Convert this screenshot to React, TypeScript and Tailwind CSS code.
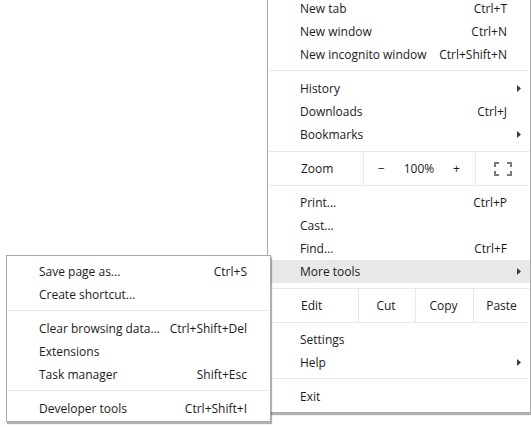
import React from 'react';

const font = { fontFamily: '"Open Sans", "Noto Sans", sans-serif' };

function Arrow() {
  return (
    <svg width="4" height="7" viewBox="0 0 4 7" className="block">
      <polygon points="0,0 4,3.5 0,7" fill="#3c3c3c" />
    </svg>
  );
}

function FullscreenIcon() {
  return (
    <svg width="18" height="14" viewBox="0 0 18 14" className="block">
      <g fill="none" stroke="#7a7a7a" strokeWidth="2">
        <path d="M1 5V1h4" />
        <path d="M13 1h4v4" />
        <path d="M17 9v4h-4" />
        <path d="M5 13H1V9" />
      </g>
    </svg>
  );
}

function Item({
  label,
  shortcut,
  arrow,
  active,
}: {
  label: string;
  shortcut?: string;
  arrow?: boolean;
  active?: boolean;
}) {
  return (
    <div className={`flex h-[23px] items-center pl-[32px] ${active ? 'bg-[#e8e8e9]' : ''}`}>
      <span className="flex-1 whitespace-nowrap">{label}</span>
      {shortcut && <span className="whitespace-nowrap">{shortcut}</span>}
      <span className="flex w-[23px] justify-end pr-[9px]">{arrow && <Arrow />}</span>
    </div>
  );
}

function Separator() {
  return <div className="mx-px mt-[4px] mb-[6px] h-px bg-[#e9e9e9]" />;
}

function MainMenu() {
  return (
    <div className="absolute left-[267px] top-[-4px] z-10 w-[264px] border border-[#a9a9a9] bg-white pb-[4px] shadow-[1px_2px_1px_rgba(0,0,0,0.3)]">
      <Item label="New tab" shortcut="Ctrl+T" />
      <Item label="New window" shortcut="Ctrl+N" />
      <Item label="New incognito window" shortcut="Ctrl+Shift+N" />
      <Separator />
      <Item label="History" arrow />
      <Item label="Downloads" shortcut="Ctrl+J" />
      <Item label="Bookmarks" arrow />

      <div className="mx-px my-[5px] flex h-[35px] border-y border-[#e9e9e9]">
        <div className="flex w-[94px] items-center pl-[32px]">Zoom</div>
        <div className="flex w-[113px] items-center justify-between border-x border-[#e9e9e9] pl-[14px] pr-[15px]">
          <span>−</span>
          <span>100%</span>
          <span>+</span>
        </div>
        <div className="flex flex-1 items-center justify-center">
          <FullscreenIcon />
        </div>
      </div>

      <Item label="Print..." shortcut="Ctrl+P" />
      <Item label="Cast..." />
      <Item label="Find..." shortcut="Ctrl+F" />
      <Item label="More tools" arrow active />

      <div className="mx-px my-[5px] flex h-[35px] border-y border-[#e9e9e9]">
        <div className="flex w-[89px] items-center pl-[32px]">Edit</div>
        <div className="flex w-[57px] items-center justify-center border-l border-[#e9e9e9] pr-[2px]">Cut</div>
        <div className="flex w-[58px] items-center justify-center border-l border-[#e9e9e9] pr-[2px]">Copy</div>
        <div className="flex flex-1 items-center justify-center border-l border-[#e9e9e9]">Paste</div>
      </div>

      <Item label="Settings" />
      <Item label="Help" arrow />
      <Separator />
      <Item label="Exit" />
    </div>
  );
}

function SubMenu() {
  return (
    <div className="absolute left-[6px] top-[255px] z-20 w-[265px] border border-[#a9a9a9] bg-white pt-[4px] pb-[1px] shadow-[1px_2px_1px_rgba(0,0,0,0.3)]">
      <Item label="Save page as..." shortcut="Ctrl+S" />
      <Item label="Create shortcut..." />
      <Separator />
      <Item label="Clear browsing data..." shortcut="Ctrl+Shift+Del" />
      <Item label="Extensions" />
      <Item label="Task manager" shortcut="Shift+Esc" />
      <Separator />
      <Item label="Developer tools" shortcut="Ctrl+Shift+I" />
    </div>
  );
}

export default function App() {
  return (
    <div className="relative h-[427px] w-[531px] overflow-hidden bg-white text-[12px] text-[#1b1b1b]" style={font}>
      <MainMenu />
      <SubMenu />
    </div>
  );
}
